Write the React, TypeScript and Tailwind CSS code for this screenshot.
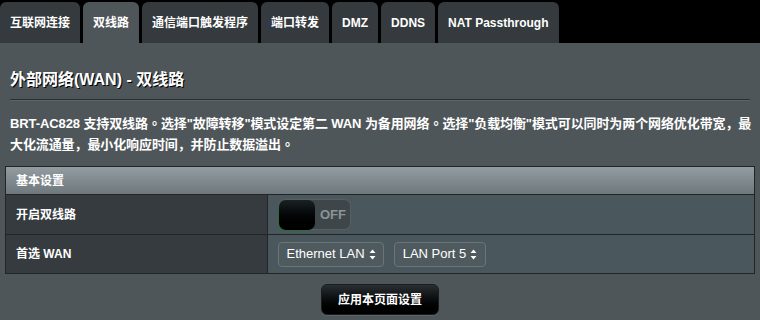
const body = '"Liberation Sans", "Noto Sans CJK SC", sans-serif';
const dot = '"Noto Sans CJK TC", sans-serif';

const tabs = ["互联网连接", "双线路", "通信端口触发程序", "端口转发", "DMZ", "DDNS", "NAT Passthrough"];

function UpDown() {
  return (
    <svg width="7" height="11" viewBox="0 0 7 11" className="ml-1">
      <path d="M3.5 0.5 L6.5 4 L0.5 4 Z" fill="#ffffff" />
      <path d="M3.5 10.5 L6.5 7 L0.5 7 Z" fill="#ffffff" />
    </svg>
  );
}

function Stop() {
  return (
    <span className="inline-block w-[13px] tracking-normal text-center" style={{ fontFamily: dot }}>
      。
    </span>
  );
}

export default function App() {
  return (
    <div className="w-[760px] h-[320px] overflow-hidden bg-[#4f5659] text-white" style={{ fontFamily: body }}>
      {/* tab strip */}
      <div className="flex items-end gap-[3px] h-[43px] bg-black pt-[2px]">
        {tabs.map((t, i) => (
          <div
            key={t}
            className={`h-[41px] flex items-center px-[10px] rounded-t-[6px] text-[12px] font-bold ${
              i === 1 ? "bg-[#4f5659]" : "bg-[#343a3d]"
            }`}
          >
            {t}
          </div>
        ))}
      </div>

      <div className="px-[10px]">
        <div className="pt-[27px] pb-[9px] text-[16px] font-bold leading-[20px] [text-shadow:1px_1px_0_#000]">
          外部网络(WAN) - 双线路
        </div>
        <div className="h-[2px] border-t border-[#2a2f31] border-b border-b-[#5c6467]" />
        <p className="pt-[12px] mr-[-8px] text-[13px] font-bold leading-[20px] tracking-[-0.1px]">
          BRT-AC828 支持双线路<Stop />选择"故障转移"模式设定第二 WAN 为备用网络<Stop />选择"负载均衡"模式可以同时为两个网络优化带宽，最大化流通量，最小化响应时间，并防止数据溢出<Stop />
        </p>
      </div>

      {/* settings table */}
      <div className="mx-[5px] mt-[11px] border border-[#222426]">
        <div className="h-[28px] flex items-center px-[10px] text-[12px] font-bold bg-gradient-to-b from-[#939da1] to-[#6f787c] border-b border-[#222426]">
          基本设置
        </div>
        <div className="flex h-[40px] border-b border-[#222426]">
          <div className="w-[262px] shrink-0 bg-[#353b3e] border-r border-[#222426] flex items-center px-[10px] text-[12px] font-bold">
            开启双线路
          </div>
          <div className="flex-1 bg-[#4a575c] flex items-center pl-[10px]">
            <div className="w-[73px] h-[31px] rounded-[7px] bg-[#3e4649] border border-[#566063] flex items-center">
              <div className="w-[36px] h-[30px] rounded-[7px] bg-gradient-to-b from-[#1b2124] to-[#000] shadow-[-1px_1px_0_#2f6b3a]" />
              <span className="ml-[5px] text-[13px] font-bold text-[#8b9497]">OFF</span>
            </div>
          </div>
        </div>
        <div className="flex h-[38px]">
          <div className="w-[262px] shrink-0 bg-[#353b3e] border-r border-[#222426] flex items-center px-[10px] text-[12px] font-bold">
            首选 WAN
          </div>
          <div className="flex-1 bg-[#4a575c] flex items-center gap-[10px] pl-[10px]">
            <div className="h-[25px] w-[106px] rounded-[4px] border border-[#6b7579] bg-[#4f5a5e] flex items-center justify-center text-[13px]">
              Ethernet LAN
              <UpDown />
            </div>
            <div className="h-[25px] w-[92px] rounded-[4px] border border-[#6b7579] bg-[#4f5a5e] flex items-center justify-center text-[13px]">
              LAN Port 5
              <UpDown />
            </div>
          </div>
        </div>
      </div>

      <div className="flex justify-center mt-[10px]">
        <button className="w-[118px] h-[31px] rounded-[6px] bg-gradient-to-b from-[#2a3033] to-[#000] border border-[#1a1d1f] shadow-[0_1px_0_#5a6366] text-[12px] font-bold text-white">
          应用本页面设置
        </button>
      </div>
    </div>
  );
}
